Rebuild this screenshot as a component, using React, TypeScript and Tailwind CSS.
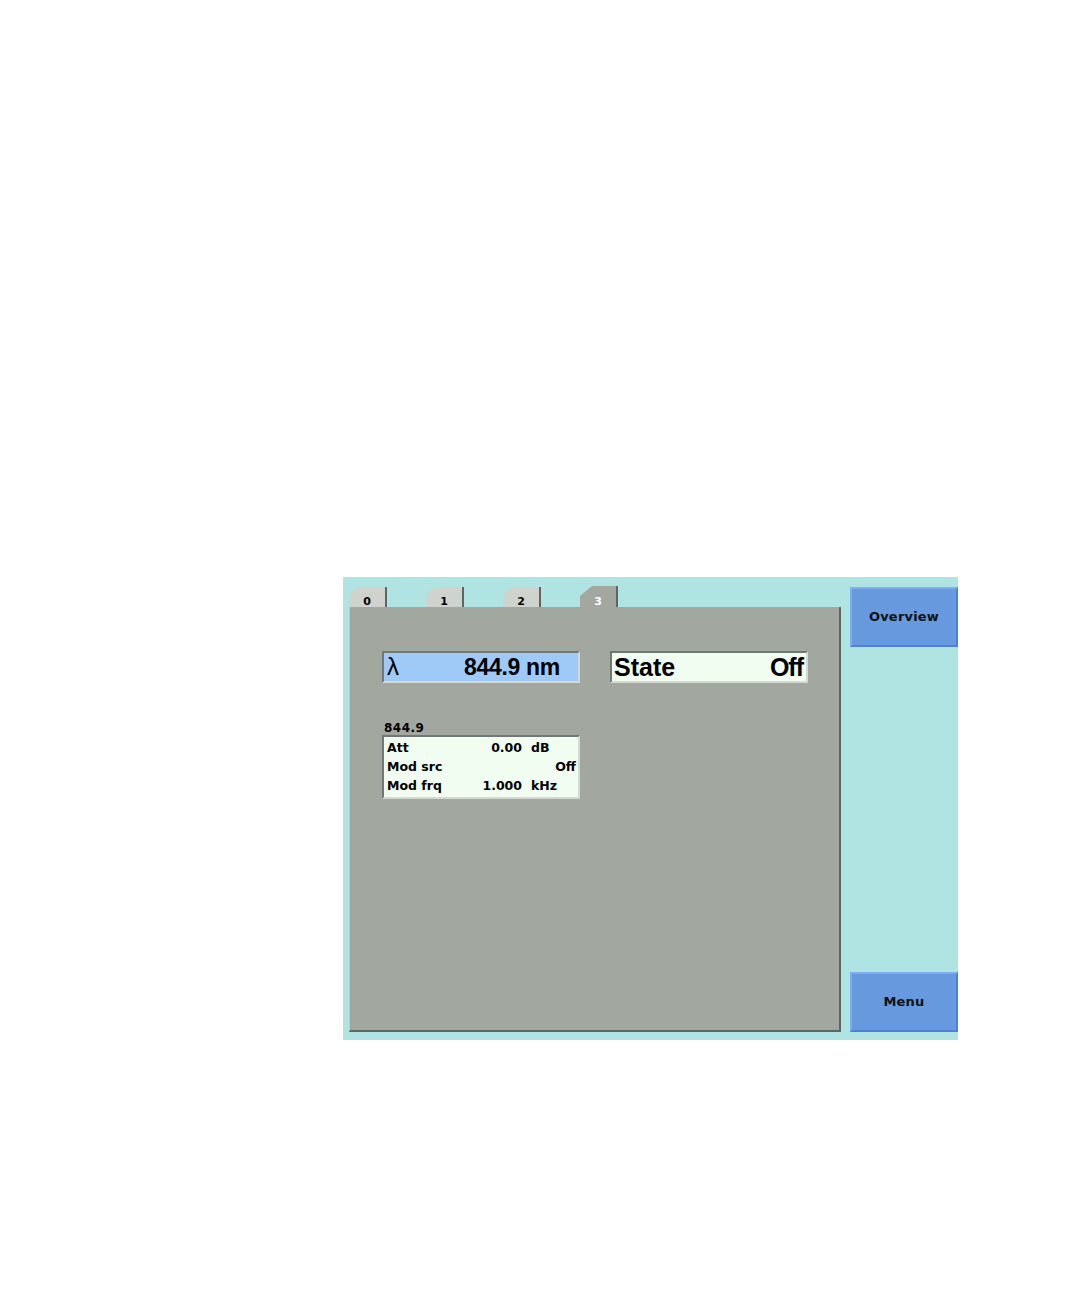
import React from 'react';

const TABS = ['0', '1', '2', '3'];
const ACTIVE = '3';

const ROWS = [
  { label: 'Att', value: '0.00', unit: 'dB' },
  { label: 'Mod src', value: 'Off', unit: '' },
  { label: 'Mod frq', value: '1.000', unit: 'kHz' },
];

function Tab({ name }: { name: string }) {
  const active = name === ACTIVE;
  if (active) {
    return (
      <div className="flex h-[21px] w-[38px] items-start justify-center border-r-2 border-[#5c6663] bg-[#a2a89f] pt-[11px] text-[11px] font-bold leading-[10px] text-white [clip-path:polygon(12px_0,100%_0,100%_100%,0_100%,0_10px)]">
        {name}
      </div>
    );
  }
  return (
    <div className="flex h-[20px] w-[38px] items-start justify-center rounded-tl-[13px] border-r-2 border-[#5c6663] bg-[#cfd3cd] pt-[10px] text-[11px] font-bold leading-[10px] text-black">
      {name}
    </div>
  );
}

function Button({ label }: { label: string }) {
  return (
    <div className="flex h-[60px] w-[108px] items-center justify-center border-2 border-t-[#80adef] border-l-[#80adef] border-b-[#4f7fd8] border-r-[#4f7fd8] bg-[#6699dd] text-[13px] font-bold tracking-[0.2px] text-[#111]">
      {label}
    </div>
  );
}

export default function App() {
  return (
    <div
      className="min-h-[1296px] bg-white pl-[343px] pt-[577px]"
      style={{ fontFamily: '"DejaVu Sans", "Liberation Sans", sans-serif' }}
    >
      <div className="flex h-[463px] w-[615px] bg-[#b0e4e2]">
        <div className="flex w-[506px] flex-col pl-[6px] pt-[9px]">
          <div className="flex h-[21px] items-end gap-[39px]">
            {TABS.map((t) => (
              <Tab key={t} name={t} />
            ))}
          </div>
          <div className="h-[425px] w-[492px] border-b-2 border-l border-r-2 border-b-[#5c6663] border-l-[#c4c9c2] border-r-[#5c6663] bg-[#a2a89f] pl-[32px] pt-[44px]">
            <div className="flex gap-[30px]" style={{ fontFamily: '"Liberation Sans", Arial, sans-serif' }}>
              <div className="flex h-[32px] w-[198px] items-center justify-between border-2 border-t-[#6f7874] border-l-[#6f7874] border-b-[#d5d9d3] border-r-[#d5d9d3] bg-[#9fcaf7] pl-[3px] pr-[18px] leading-none text-black">
                <span className="text-[24px]">λ</span>
                <span className="text-[23px] font-bold tracking-[-0.3px]">844.9 nm</span>
              </div>
              <div className="flex h-[32px] w-[198px] items-center justify-between border-2 border-t-[#6f7874] border-l-[#6f7874] border-b-[#d5d9d3] border-r-[#d5d9d3] bg-[#f1fdf0] pl-[2px] pr-[3px] text-[25px] font-bold leading-none text-black">
                <span>State</span>
                <span className="tracking-[-1px]">Off</span>
              </div>
            </div>
            <div className="mt-[38px] pl-[2px] text-[12px] font-bold leading-[14px] tracking-[0.5px] text-black">
              844.9
            </div>
            <div className="w-[198px] border-2 border-t-[#6f7874] border-l-[#6f7874] border-b-[#d5d9d3] border-r-[#d5d9d3] bg-[#f1fdf0] pb-[1px] pl-[3px] pr-[2px] pt-[2px] text-[12.5px] font-bold text-black">
              {ROWS.map((r) =>
                r.unit ? (
                  <div key={r.label} className="flex h-[19px] items-center">
                    <span className="w-[95px]">{r.label}</span>
                    <span className="w-[40px] text-right">{r.value}</span>
                    <span className="ml-[9px] flex-1">{r.unit}</span>
                  </div>
                ) : (
                  <div key={r.label} className="flex h-[19px] items-center justify-between">
                    <span>{r.label}</span>
                    <span>{r.value}</span>
                  </div>
                ),
              )}
            </div>
          </div>
        </div>
        <div className="ml-[2px] flex flex-col justify-between pb-[8px] pt-[10px]">
          <Button label="Overview" />
          <Button label="Menu" />
        </div>
      </div>
    </div>
  );
}
